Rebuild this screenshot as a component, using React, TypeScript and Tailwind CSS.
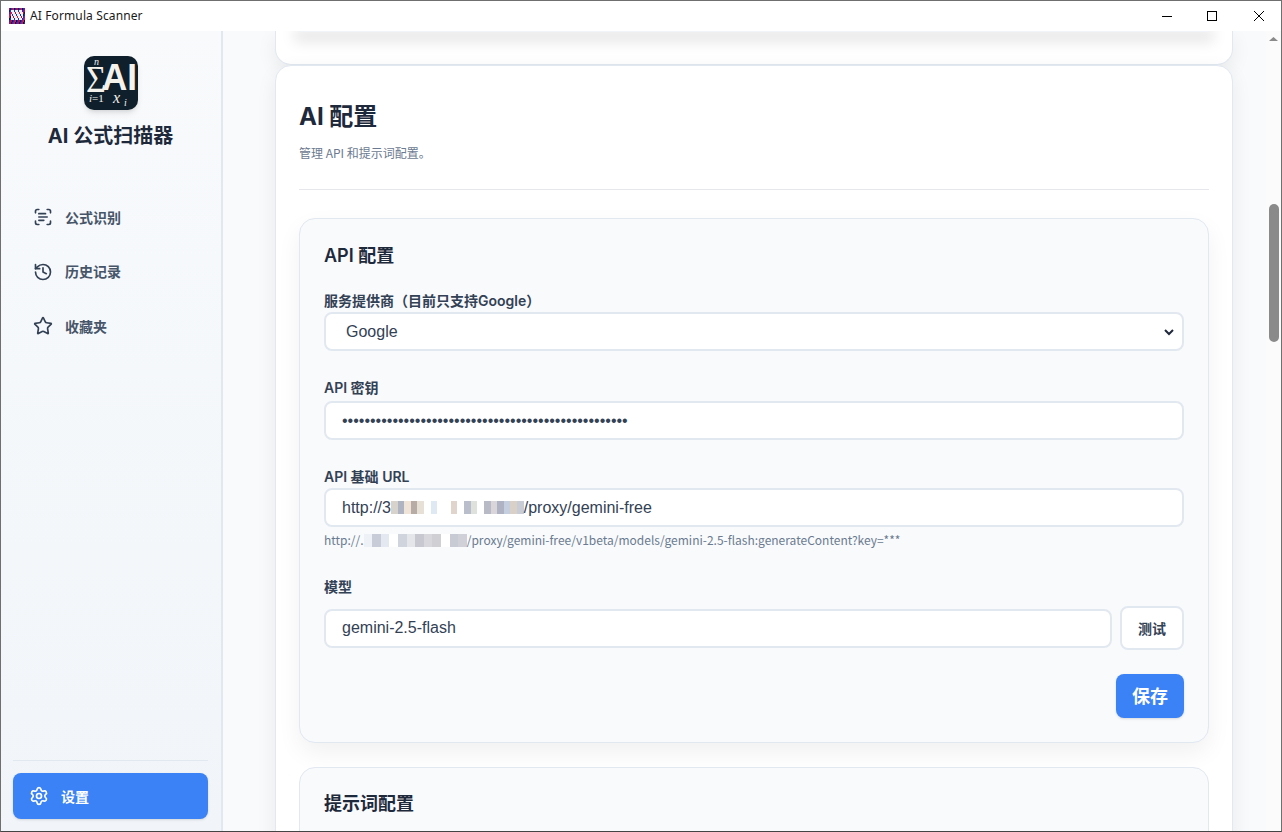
import { History, ScanText, Settings, Star } from 'lucide-react';

const CJK = "font-['Inter','Noto_Sans_CJK_SC',sans-serif]";

// 模糊处理过的地址片段
const BLUR_A = ['#d8d2cc', '#aeb4c2', '#f0e4d8', '#b7aca6', '#e6e0d6', '#fff', '#dfe9f4', '#fff', '#fff', '#e0d4cc', '#fff', '#b9bdcc', '#dfe2dc', '#fff', '#b8bbc6', '#d9d5d9', '#aeb2c2', '#c4cede', '#d9d0c8', '#c8ccd4'];
const BLUR_B = ['#eef1f6', '#c8ccd8', '#e4e8f0', '#fff', '#d0d4dc', '#e4e6ea', '#c8c8d0', '#d8d8dc', '#cfcfd4', '#fff', '#c8cad4', '#d0d0d8'];

function Blur({ colors, w, h }: { colors: string[]; w: number; h: number }) {
  return (
    <span className="inline-flex align-middle">
      {colors.map((c, i) => (
        <span key={i} className="block" style={{ width: w, height: h, background: c }} />
      ))}
    </span>
  );
}

function Label({ children }: { children: React.ReactNode }) {
  return <div className="text-[14px] leading-[20px] font-semibold text-[#334155]">{children}</div>;
}

function Field({ children, className = '' }: { children: React.ReactNode; className?: string }) {
  return (
    <div className={`flex h-[39px] items-center rounded-lg border-2 border-[#e2e8f0] bg-white pl-4 pr-2 font-['Liberation_Sans',sans-serif] text-[16px] text-[#334155] ${className}`}>
      {children}
    </div>
  );
}

function NavItem({ icon, label }: { icon: React.ReactNode; label: string }) {
  return (
    <div className="flex h-[46px] items-center gap-3 pl-5 text-[14px] font-semibold text-[#475569]">
      <span className="text-[#334155]">{icon}</span>
      {label}
    </div>
  );
}

function TitleIcon() {
  const stripes = ['#c01028', '#1a1a60', '#2030c0', '#902090', '#e02030', '#101040', '#1030d0', '#a01070'];
  return (
    <svg width="16" height="16" viewBox="0 0 16 16" shapeRendering="crispEdges">
      <rect width="16" height="16" fill="#fff" />
      {Array.from({ length: 128 }, (_, i) => {
        const x = i % 16;
        const row = Math.floor(i / 16);
        // el centro del icono es casi blanco, con columnas de color
        const light = row >= 1 && row <= 5 && x >= 2 && x <= 13 && (x + row * 3) % 4 !== 0;
        return <rect key={i} x={x} y={row * 2} width="1" height="2" fill={light ? '#eef0fa' : stripes[(x + row) % 8]} />;
      })}
    </svg>
  );
}

function Logo() {
  return (
    <div className="h-[54px] w-[54px] rounded-[10px] bg-[#0f1f2b] shadow-md">
      <svg width="54" height="54" viewBox="0 0 54 54">
        <text x="2" y="36" fill="#f5f2ec" fontFamily="Liberation Serif" fontSize="38" textLength="20" lengthAdjust="spacingAndGlyphs">Σ</text>
        <text x="18" y="34" fill="#f5f2ec" fontFamily="Liberation Sans" fontSize="36" fontWeight="700" textLength="35" lengthAdjust="spacingAndGlyphs">AI</text>
        <text x="10" y="9" fill="#f5f2ec" fontFamily="Liberation Serif" fontSize="10" fontStyle="italic">n</text>
        <text x="5" y="46" fill="#f5f2ec" fontFamily="Liberation Serif" fontSize="11">
          <tspan fontStyle="italic">i</tspan>=1
        </text>
        <text x="29" y="47" fill="#f5f2ec" fontFamily="Liberation Serif" fontSize="16" fontStyle="italic">x</text>
        <text x="40" y="50" fill="#f5f2ec" fontFamily="Liberation Serif" fontSize="10" fontStyle="italic">i</text>
      </svg>
    </div>
  );
}

export default function App() {
  return (
    <div className={`flex h-[832px] w-[1282px] flex-col overflow-hidden border border-[#6f6f6f] border-b-[#444] bg-white ${CJK}`}>
      <div className="flex h-[30px] shrink-0 items-center bg-white pl-2">
        <TitleIcon />
        <span className="ml-[5px] font-['Noto_Sans',sans-serif] text-[12px] tracking-[0.12px] text-[#1a1a1a]">AI Formula Scanner</span>
        <div className="ml-auto flex h-full items-center text-black">
          <svg className="mr-[33px]" width="12" height="12" viewBox="0 0 12 12"><path d="M1 6.5h10" stroke="currentColor" /></svg>
          <svg className="mr-[35px]" width="12" height="12" viewBox="0 0 12 12"><rect x="1.5" y="1.5" width="9" height="9" fill="none" stroke="currentColor" /></svg>
          <svg className="mr-[16px]" width="12" height="12" viewBox="0 0 12 12"><path d="M1 1l10 10M11 1L1 11" stroke="currentColor" /></svg>
        </div>
      </div>

      <div className="flex min-h-0 flex-1">
        <aside className="flex w-[222px] shrink-0 flex-col border-r-2 border-[#e2e8f0] bg-gradient-to-b from-[#f8fafc] to-[#f1f5f9] pr-[13px] pl-3 pb-3">
          <div className="flex flex-col items-center pt-[25px]">
            <Logo />
            <div className="mt-[11px] text-[20px] leading-[30px] font-bold text-[#1e293b]">AI 公式扫描器</div>
          </div>
          <nav className="mt-[43px] flex flex-col gap-[8.5px]">
            <NavItem icon={<ScanText size={20} />} label="公式识别" />
            <NavItem icon={<History size={20} />} label="历史记录" />
            <NavItem icon={<Star size={20} />} label="收藏夹" />
          </nav>
          <div className="mt-auto border-t border-[#e2e8f0] pt-3">
            <div className="flex h-[46px] items-center gap-3 rounded-lg bg-[#3b82f6] pl-4 text-[14px] font-semibold text-white shadow-sm">
              <Settings size={20} />
              设置
            </div>
          </div>
        </aside>

        <main className="flex min-w-0 flex-1 bg-[#f8fafc]">
          <div className="flex min-w-0 flex-1 flex-col overflow-hidden pr-[33px] pl-[52px]">
            <div className="h-[34px] shrink-0 overflow-hidden rounded-b-2xl border border-t-0 border-[#e2e8f0] bg-white shadow-[0_6px_20px_rgba(0,0,0,0.07)]">
              <div className="mx-6 h-px bg-[#f1f5f9] shadow-[0_4px_14px_6px_rgba(0,0,0,0.1)]" />
            </div>
            <section className="shrink-0 rounded-2xl border border-[#e2e8f0] bg-white px-[23px] pt-[33px] pb-6 shadow-[0_6px_20px_rgba(0,0,0,0.07)]">
              <h1 className="text-[24px] leading-[36px] font-bold text-[#1e293b]">AI 配置</h1>
              <p className="mt-[9px] font-['Noto_Sans_CJK_SC',sans-serif] text-[12px] leading-[18px] text-[#6b7a90]">管理 API 和提示词配置。</p>
              <div className="mt-[27px] h-px bg-[#e5e7eb]" />

              <div className="mt-7 h-[525px] rounded-2xl border border-[#e2e8f0] bg-[#f8fafc] px-6 pt-[23px] shadow-[0_10px_25px_rgba(0,0,0,0.06)]">
                <h2 className="text-[18px] leading-[28px] font-semibold text-[#1e293b]">API 配置</h2>
                <div className="mt-[21px]"><Label>服务提供商（目前只支持Google）</Label></div>
                <Field className="mt-[1px]">
                  <span className="pl-[4px]">Google</span>
                  <svg className="ml-auto text-[#1e293b]" width="10" height="10" viewBox="0 0 10 10"><path d="M1 3l4 4 4-4" fill="none" stroke="currentColor" strokeWidth="2" /></svg>
                </Field>
                <div className="mt-[27px]"><Label>API 密钥</Label></div>
                <Field className="mt-[3px]">
                  <span>{'•'.repeat(51)}</span>
                </Field>
                <div className="mt-[27px]"><Label>API 基础 URL</Label></div>
                <Field className="mt-[1px]">
                  http://3<Blur colors={BLUR_A} w={6.65} h={13} />/proxy/gemini-free
                </Field>
                <div className="mt-[4px] flex h-[18px] items-center font-['Noto_Sans_CJK_SC',sans-serif] text-[12px] text-[#6b7a90]">
                  http://.<Blur colors={BLUR_B} w={8.6} h={13} />/proxy/gemini-free/v1beta/models/gemini-2.5-flash:generateContent?key=***
                </div>
                <div className="mt-[28px]"><Label>模型</Label></div>
                <div className="mt-[9px] flex items-center gap-2">
                  <Field className="flex-1">gemini-2.5-flash</Field>
                  <button type="button" className="flex h-[44px] w-[64px] items-center justify-center rounded-lg border-2 border-[#e2e8f0] bg-white text-[14px] font-semibold text-[#334155]">
                    测试
                  </button>
                </div>
                <div className="mt-[24px] flex justify-end">
                  <button type="button" className="h-[44px] w-[68px] rounded-lg bg-[#3b82f6] text-[18px] font-bold text-white shadow-sm">
                    保存
                  </button>
                </div>
              </div>

              <div className="mt-6 rounded-2xl border border-[#e2e8f0] bg-[#f8fafc] px-6 pt-[22px] pb-8">
                <h2 className="text-[18px] leading-[28px] font-semibold text-[#1e293b]">提示词配置</h2>
              </div>
            </section>
          </div>

          <div className="relative w-[15px] shrink-0 bg-[#fbfbfb]">
            <svg className="absolute top-[5px] left-[3px]" width="9" height="6" viewBox="0 0 9 6"><path d="M4.5 1L9 5H0z" fill="#8a8a8a" /></svg>
            <div className="absolute top-[173px] left-[3px] h-[138px] w-[10px] rounded-[5px] bg-[#8a8a8a]" />
          </div>
        </main>
      </div>
    </div>
  );
}
